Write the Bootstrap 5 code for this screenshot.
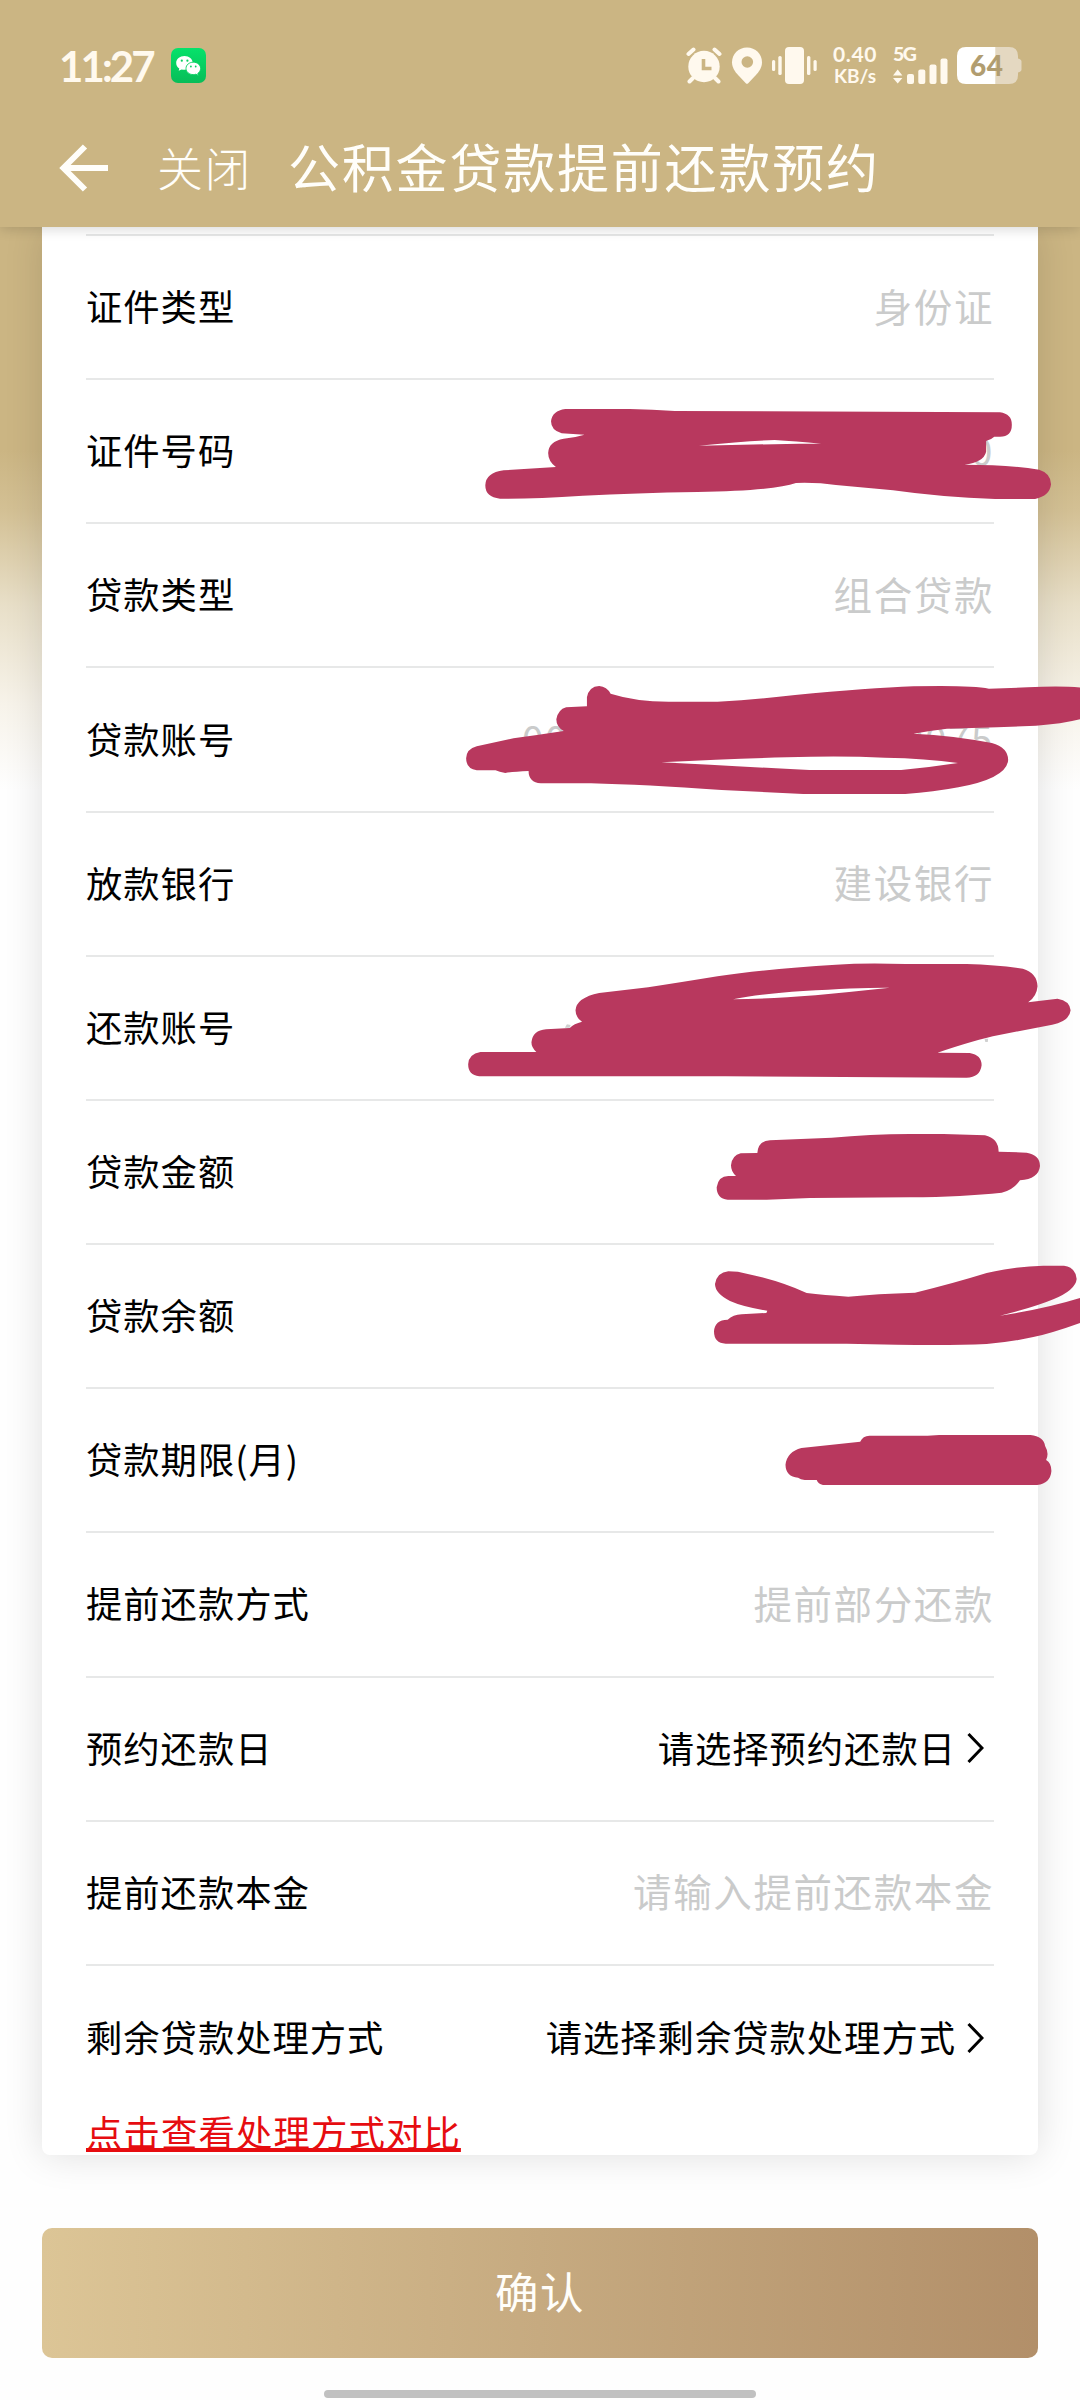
<!DOCTYPE html>
<html lang="zh-CN">
<head>
<meta charset="utf-8">
<meta name="viewport" content="width=device-width, initial-scale=1">
<title>公积金贷款提前还款预约</title>
<link href="https://cdn.jsdelivr.net/npm/bootstrap@5.3.0/dist/css/bootstrap.min.css" rel="stylesheet">
<style>
html,body{height:2400px;overflow:hidden}
body{font-family:"Noto Sans CJK SC","Noto Sans",sans-serif;color:#000;background:#fefefe}
.screen{width:1080px;height:2400px;overflow:hidden;background:linear-gradient(180deg,#cbb583 0,#cbb583 450px,#d3c094 510px,#e8dfc8 605px,#f7f3ea 705px,#fefefe 790px)}
.app-head{height:227px;background:#cbb583;box-shadow:0 2px 12px rgba(0,0,0,.16);z-index:2}
.status{height:130px;padding:0 58px 0 59px;color:#fff9ee}
.clock{font:700 42px/1 Lato,sans-serif;letter-spacing:-2.9px;width:112px;padding-top:1px}
.rate{font:700 21px/22px Lato,sans-serif;width:48px;margin:0 14px 0 14px;text-align:center;letter-spacing:.6px}
.rate .unit{font-size:19px;letter-spacing:0}
.titlebar{height:76px;color:#fffefa;padding-left:59px}
.titlebar svg{margin-top:-1px}
.close-txt{font-size:46px;letter-spacing:1.5px;font-weight:300;line-height:60px;margin:-4px 0 0 49px;width:131px}
.title-txt{font-size:52px;letter-spacing:1.8px;line-height:60px;margin-top:-4px}
.panel{width:996px;height:1928px;border-radius:0 0 8px 8px;box-shadow:0 0 38px rgba(0,0,0,.13);padding:7px 44px 0}
.item{height:144.17px;border-top:2px solid #e7e8e8;font-size:36.3px;letter-spacing:1px;line-height:50px;padding-bottom:4px}
.item-last{padding-bottom:1px}
.val{font-size:38.5px;letter-spacing:1.6px;color:#cacbcb;padding-bottom:1px}
.pick{padding-right:9px}
.pick svg{margin:3px 1px 0 11px}
.masked{width:472px}
.cmp{font-size:36.4px;letter-spacing:1.1px;line-height:46px;color:#e60c10;text-decoration:underline;text-decoration-thickness:3.5px;text-underline-offset:1px;text-decoration-skip-ink:none}
.confirm{width:996px;height:130px;margin-top:73px;border:0;border-radius:10px;background:linear-gradient(90deg,#dcc596 0,#c6aa80 50%,#b28f69 100%);color:#fffefa;font-size:43.5px;letter-spacing:1.5px;padding-bottom:10px}
.homebar{width:432px;height:8px;border-radius:4px;background:#c1c1c1;margin-top:32px}
.scribble{left:0;top:0;z-index:3;pointer-events:none}
</style>
<script src="https://cdn.jsdelivr.net/npm/bootstrap@5.3.0/dist/js/bootstrap.bundle.min.js"></script>
</head>
<body>
<div class="screen position-relative d-flex flex-column align-items-center">
<header class="app-head position-relative w-100">
  <div class="status d-flex align-items-center">
    <span class="clock">11:27</span>
    <svg width="35" height="35" viewBox="0 0 35 35"><defs><linearGradient id="wg" x2="0" y2="1"><stop stop-color="#06e26b"/><stop offset="1" stop-color="#08bd58"/></linearGradient></defs><rect width="35" height="35" rx="7" fill="url(#wg)"/><path d="M13.5 8c-4.700 0-8.300 3-8.300 6.900 0 2.300 1.200 4.200 3.100 5.500l-.6 2.400 2.900-1.400c1 .3 2.100.4 3.300.4 4.500-.2 7.800-3.100 7.800-6.800C21.700 11 18.100 8 13.500 8z" fill="#fff"/><path d="M22.300 14.200c-4.100 0-7.300 2.700-7.300 6.200s3.200 6.200 7.300 6.200c.9 0 1.800-.1 2.600-.4l2.400 1.200-.5-2c1.700-1.200 2.800-2.900 2.800-5 0-3.500-3.200-6.200-7.300-6.200z" fill="#fff" stroke="#08cf60" stroke-width=".9"/><g fill="#08cf60"><circle cx="10.800" cy="12.700" r="1.100"/><circle cx="16.400" cy="12.700" r="1.100"/><circle cx="19.900" cy="18.500" r=".9"/><circle cx="24.700" cy="18.500" r=".9"/></g></svg>
    <div class="d-flex align-items-center ms-auto">
      <svg width="36" height="37" viewBox="0 0 36 37"><g fill="none" stroke="#fff9ee" stroke-width="4" stroke-linecap="round"><path d="M2.500 7l5-4.500M33.500 7l-5-4.500M7 31l-3.500 3.500M29 31l3.500 3.500"/></g><circle cx="18" cy="19.500" r="15.700" fill="#fff9ee"/><path d="M17.500 12v9.500h8" fill="none" stroke="#cbb583" stroke-width="3.600"/></svg>
      <svg class="ms-2" width="34" height="37" viewBox="0 0 34 37"><path d="M17 .5C8.500.5 2 7 2 15.200c0 5.500 3 9.500 6.500 13.300l7.300 7.700q1.200 1 2.400 0l7.300-7.700C29 24.700 32 20.700 32 15.200 32 7 25.500.5 17 .5z" fill="#fff9ee"/><circle cx="17.300" cy="15" r="5.800" fill="#cbb583"/></svg>
      <svg class="ms-2" width="45" height="37" viewBox="0 0 45 37" fill="#fff9ee"><rect x="13" width="19" height="37" rx="4"/><rect x="6.300" y="9" width="3.400" height="19" rx="1.500"/><rect x="0" y="13" width="3.200" height="11" rx="1.500"/><rect x="35" y="9" width="3.400" height="19" rx="1.500"/><rect x="41.500" y="13" width="3.200" height="11" rx="1.500"/></svg>
      <div class="rate"><div>0.40</div><div class="unit">KB/s</div></div>
      <svg width="56" height="50" viewBox="0 -6 56 50" fill="#fff9ee"><text x="0" y="15" font-family="Lato" font-size="19.500" font-weight="900" textLength="24">5G</text><path d="M0 29.500L4.700 23.500 9.400 29.500zM0 32L4.700 37.500 9.400 32z"/><rect x="14" y="28" width="7" height="10" rx="2"/><rect x="25.300" y="23.500" width="7" height="14.500" rx="2"/><rect x="36.500" y="18.500" width="7" height="19.500" rx="2"/><rect x="47.500" y="12.500" width="7" height="25.500" rx="2"/></svg>
      <svg class="ms-2" width="65" height="37" viewBox="0 0 65 37"><path d="M38.500 0H52q9 0 9 9v2.500q3.500 1 3.500 3v8q0 2-3.500 3V28q0 9-9 9H38.500z" fill="#e4d8c1"/><path d="M38.500 0H9Q0 0 0 9v19q0 9 9 9h29.500z" fill="#fff"/><text x="13" y="28.500" font-family="Lato" font-size="28" font-weight="900" fill="#b19d70" textLength="33">64</text></svg>
    </div>
  </div>
  <div class="titlebar d-flex align-items-center">
    <svg width="49" height="48" viewBox="0 0 49 48" fill="none" stroke="#fffefa" stroke-width="6"><path d="M26 2.500L4.500 24 26 45.500M4 24h45"/></svg>
    <span class="close-txt">关闭</span><span class="title-txt text-nowrap">公积金贷款提前还款预约</span>
  </div>
</header>
<main class="panel bg-white position-relative flex-shrink-0">
  <div class="item d-flex justify-content-between align-items-center"><span>证件类型</span><span class="val">身份证</span></div>
  <div class="item d-flex justify-content-between align-items-center"><span>证件号码</span><span class="val">0</span></div>
  <div class="item d-flex justify-content-between align-items-center"><span>贷款类型</span><span class="val">组合贷款</span></div>
  <div class="item d-flex justify-content-between align-items-center"><span>贷款账号</span><span class="val masked d-flex justify-content-between"><span>00</span><span>0075</span></span></div>
  <div class="item d-flex justify-content-between align-items-center"><span>放款银行</span><span class="val">建设银行</span></div>
  <div class="item d-flex align-items-center"><span>还款账号</span></div>
  <div class="item d-flex align-items-center"><span>贷款金额</span></div>
  <div class="item d-flex align-items-center"><span>贷款余额</span></div>
  <div class="item d-flex align-items-center"><span>贷款期限(月)</span></div>
  <div class="item d-flex justify-content-between align-items-center"><span>提前还款方式</span><span class="val">提前部分还款</span></div>
  <div class="item d-flex justify-content-between align-items-center"><span>预约还款日</span><span class="pick d-flex align-items-center">请选择预约还款日<svg width="17" height="32" viewBox="0 0 17 32" fill="none" stroke="#000" stroke-width="3"><path d="M1.500 2L15 16 1.500 30"/></svg></span></div>
  <div class="item d-flex justify-content-between align-items-center"><span>提前还款本金</span><span class="val">请输入提前还款本金</span></div>
  <div class="item item-last d-flex justify-content-between align-items-center"><span>剩余贷款处理方式</span><span class="pick d-flex align-items-center">请选择剩余贷款处理方式<svg width="17" height="32" viewBox="0 0 17 32" fill="none" stroke="#000" stroke-width="3"><path d="M1.500 2L15 16 1.500 30"/></svg></span></div>
  <a class="cmp d-block">点击查看处理方式对比</a>
</main>
<button class="confirm btn flex-shrink-0">确认</button>
<div class="homebar flex-shrink-0"></div>
<svg class="scribble position-absolute" width="1080" height="2400" viewBox="0 0 1080 2400" fill="#b8385e" fill-rule="evenodd">
  <g transform="translate(440 380) scale(.40816 .33333)">
    <path d="M307 87H465Q520 88 575 93L1372 97Q1401 102 1401 134Q1401 170 1372 170H1358Q1350 179 1338 183V215Q1332 247 1285 254Q1390 254 1468 269Q1497 280 1497 313Q1494 348 1458 357H1360Q1230 352 1110 331L970 315Q925 307 872 309Q820 332 630 336Q480 339 350 347Q230 357 147 356Q111 352 111 316Q112 278 156 271L284 261Q265 244 265 219Q266 184 303 176Q330 173 354 164L298 160Q272 151 272 124Q275 92 307 87ZM634 197L880 191H934Q870 184 820 180Q750 183 634 197Z"/>
  </g>
  <g transform="translate(440 660) scale(.40816 .33333)">
    <path d="M360 139V112Q365 79 390 78Q409 80 418 101Q480 125 560 125H680Q780 118 870 105Q1050 84 1160 79Q1300 75 1345 86L1440 82Q1540 76 1590 86V170Q1540 190 1460 197L1365 202L1242 206Q1200 212 1160 221Q1260 227 1352 249Q1392 263 1392 300Q1389 355 1270 382Q1210 396 1140 402H890Q790 396 690 390Q500 374 370 370H247Q217 367 217 333Q180 335 160 339Q145 336 136 331H90Q64 326 64 295Q65 267 90 259L180 235Q245 224 303 213Q285 201 285 178Q289 149 309 142ZM542 307Q700 317 905 330H1130Q1200 322 1269 309Q1190 295 1090 293Q980 287 850 292Q720 296 542 307Z"/>
  </g>
  <g transform="translate(440 940) scale(.40816 .33333)">
    <path d="M99 336H236Q224 323 224 307Q227 271 260 268L318 264Q328 251 348 245Q332 233 332 211Q334 173 390 159L510 142Q580 129 680 109Q800 87 970 74Q1040 68 1140 72H1290Q1370 75 1428 86Q1463 99 1464 139Q1462 170 1441 187L1513 176Q1543 182 1545 211Q1543 243 1500 254L1370 285Q1310 300 1219 338L1298 339Q1327 345 1327 376Q1323 413 1290 413L700 409H96Q69 406 69 373Q70 342 99 336ZM718 178Q800 177 920 166Q1010 155 1102 143Q1030 142 890 153Q780 162 718 178Z"/>
    <path d="M306 263l5-10 9 2-2 8zM1334 296h9l-1 10h-6z" fill="#d0d0d0"/>
  </g>
  <g transform="translate(680 1110) scale(.33333)">
    <path d="M232 129Q235 92 270 91L455 83Q570 73 690 72H790L915 76Q955 85 956 125L1040 128Q1080 135 1080 168Q1076 207 1020 211Q1000 240 965 248Q850 260 690 262L390 264L260 269H143Q110 266 110 232Q115 198 145 198H168Q153 185 153 166Q156 136 182 130Z"/>
    <path d="M145 484Q175 484 200 491Q300 512 380 549Q430 555 505 560Q590 551 705 548Q820 520 920 489Q1000 470 1090 467H1152Q1187 472 1190 507Q1187 540 1120 568Q1060 593 960 617Q1100 596 1210 561V635Q1120 668 1060 681Q990 697 920 702Q810 707 650 704L500 701H137Q102 700 102 664Q104 630 143 629Q159 614 185 613L259 609L262 602Q190 591 150 573Q105 550 105 522Q111 487 145 484Z"/>
  </g>
  <path transform="translate(740 1410) scale(.332 .33333)" d="M362 95Q370 77 390 77H565L600 75H875Q915 80 919 108Q932 130 922 150Q938 159 938 183Q935 220 895 225H250Q235 222 231 210H195Q182 209 175 203Q138 200 137 164Q142 125 185 114Z"/>
</svg>
</div>
</body>
</html>
